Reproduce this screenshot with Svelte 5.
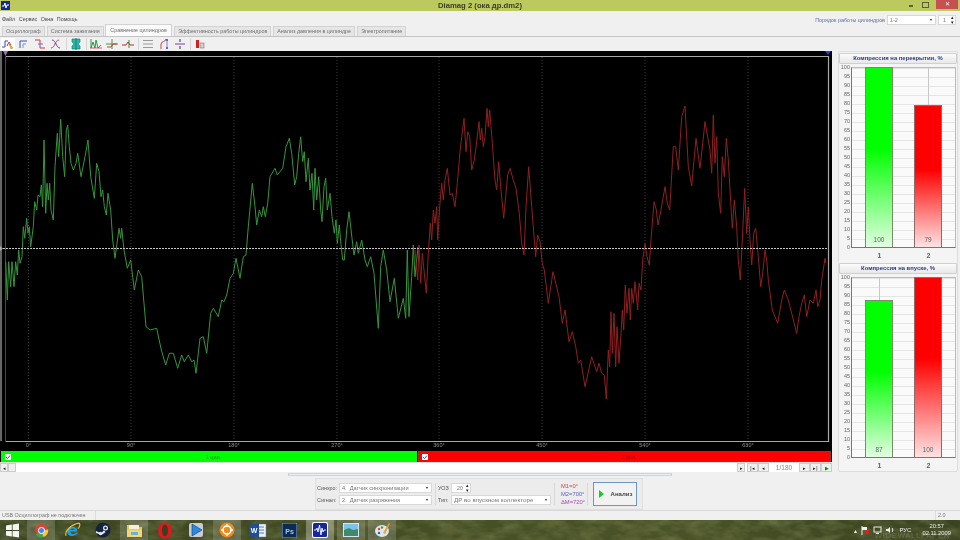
<script>
    // traced from the 3x view: [x, y] pairs, flat
    const greenRaw = [17,455,22,570,26,455,32,530,36,455,42,530,47,455,52,495,56,420,60,460,66,440,70,350,74,385,80,325,84,370,88,350,92,410,100,350,104,275,110,300,114,255,120,260,124,225,128,290,132,90,137,310,141,220,145,270,149,220,153,300,160,330,165,170,172,70,176,140,182,28,188,140,194,200,199,60,203,45,208,110,213,160,220,180,228,160,233,130,243,200,255,140,264,90,272,200,283,265,290,160,297,185,303,260,308,240,313,290,319,315,324,250,332,300,338,390,345,445,357,355,362,385,365,355,372,420,382,475,392,450,403,540,415,480,425,500,438,650,450,660,470,655,484,720,497,765,508,730,520,730,533,775,545,735,553,755,565,735,575,755,582,750,588,790,600,685,610,680,620,730,632,610,640,595,655,620,665,570,672,575,680,555,690,505,700,490,708,445,720,505,730,440,738,435,745,350,757,220,765,290,770,345,778,300,785,320,790,290,796,320,803,280,810,200,825,175,832,195,848,175,858,110,868,85,875,130,884,225,890,200,896,130,902,80,908,155,913,125,918,215,925,145,930,240,936,190,941,300,945,175,950,270,956,200,962,300,966,335,972,230,977,205,982,300,990,250,996,320,1003,370,1008,330,1012,400,1018,345,1022,395,1028,450,1033,450,1040,360,1047,305,1056,385,1062,435,1070,395,1075,430,1085,390,1095,450,1102,470,1112,440,1122,490,1135,655,1142,470,1150,420,1160,480,1170,575,1183,505,1195,625,1210,565,1217,625,1222,420,1227,620,1235,500,1240,405,1245,500,1254,410];
    const redRaw = [0,450,8,540,12,435,17,550,22,460,28,520,34,580,40,460,46,370,50,420,55,330,60,370,65,320,68,420,74,320,80,250,85,300,90,240,97,205,105,285,112,280,120,320,127,250,135,155,140,110,147,55,153,155,158,95,164,110,170,210,178,180,185,125,192,65,196,120,200,85,205,140,210,110,216,25,220,80,224,30,232,130,240,240,245,270,251,185,258,270,266,355,278,225,285,205,295,240,303,265,313,340,320,430,327,465,333,320,341,200,350,320,362,470,368,405,375,425,382,490,388,510,400,610,414,515,432,590,442,670,450,630,462,725,472,695,482,740,490,790,497,780,510,860,530,770,545,815,552,790,560,820,568,825,574,897,580,750,584,800,588,635,592,760,597,640,602,800,606,680,612,790,618,700,622,630,626,690,631,555,636,640,642,565,646,660,650,565,655,610,660,545,668,630,672,550,678,570,683,480,690,430,696,470,703,495,708,420,717,305,724,330,729,375,738,330,745,290,750,260,757,310,764,330,775,140,782,140,790,210,800,50,810,18,820,200,830,258,843,115,855,205,870,65,885,150,890,220,895,45,900,190,905,110,910,280,917,340,922,170,928,230,934,115,940,180,945,270,952,385,958,300,965,380,970,480,976,540,982,420,989,265,995,400,1000,320,1005,420,1010,495,1016,400,1022,385,1030,470,1037,560,1043,520,1050,450,1055,480,1060,540,1072,630,1088,670,1100,600,1108,570,1120,600,1130,640,1145,700,1152,650,1160,610,1168,585,1175,650,1185,600,1195,610,1203,570,1208,620,1215,600,1220,540,1230,475,1233,490];

    const trace = (raw, ox, oy) => {
        let out = [];
        for (let i = 0; i < raw.length; i += 2) {
            out.push(`${(ox + raw[i] / 3).toFixed(1)},${(oy + raw[i + 1] / 3).toFixed(1)}`);
        }
        return out.join(" ");
    };
    const greenLine = trace(greenRaw, 0, 110);
    const redLine = trace(redRaw, 415, 100);

    const grid = [
        [28.5, "0°"], [131, "90°"], [234, "180°"], [337, "270°"],
        [439, "360°"], [542, "450°"], [645, "540°"], [748, "630°"],
    ];
    const tabs = [
        "Осциллограф", "Система зажигания", "Сравнение цилиндров",
        "Эффективность работы цилиндров", "Анализ давления в цилиндре", "Электропитание",
    ];
    const ticks = Array.from({ length: 21 }, (_, i) => 100 - i * 5);
    const charts = [
        { title: "Компрессия на перекрытии, %", bars: [100, 79] },
        { title: "Компрессия на впуске, %", bars: [87, 100] },
    ];
</script>

<div class="app">
    <header class="title">
        <svg class="appicon" width="9" height="9" viewBox="0 0 9 9"><rect width="9" height="9" fill="#14289a" /><path d="M1 5h2l1-3 1 5 1-3h2" stroke="#fff" fill="none" /></svg>
        <span class="caption">Diamag 2 (ока др.dm2)</span>
        <div class="winbtns">
            <span class="min"></span>
            <span class="max"></span>
            <span class="close">✕</span>
        </div>
    </header>

    <div class="menu">
        <nav><span>Файл</span><span>Сервис</span><span>Окна</span><span>Помощь</span></nav>
        <div class="order">
            <span>Порядок работы цилиндров</span>
            <div class="select order-sel">1-2<i></i></div>
            <div class="select order-spin">1<b>▴<br />▾</b></div>
        </div>
    </div>

    <div class="tabs">
        {#each tabs as tab, i}
            <div class="tab" class:tab-on={i === 2}>{tab}</div>
        {/each}
    </div>

    <div class="toolbar">
        <button class="tool first"><svg viewBox="0 0 14 12"><path d="M1 9h3V3h3" stroke="#2a4cc0" fill="none" /><path d="M6 8l2-4 2 3" stroke="#d03030" fill="none" /><path d="M8 6l4 4-2 1z" fill="#f0c020" stroke="#807010" stroke-width=".4" /></svg></button>
        <button class="tool"><svg viewBox="0 0 14 12"><path d="M3 10V3h7" stroke="#3050c0" fill="none" /><path d="M6 10V6h3" stroke="#8090d0" fill="none" /></svg></button>
        <button class="tool"><svg viewBox="0 0 14 12"><path d="M2 2h5v8h5" stroke="#d03838" fill="none" /><path d="M5 6h5" stroke="#6070c0" fill="none" /></svg></button>
        <button class="tool"><svg viewBox="0 0 14 12"><path d="M2 10C6 10 6 2 10 2" stroke="#d04040" fill="none" /><path d="M3 2c4 0 4 8 8 8" stroke="#4050c8" fill="none" /></svg></button>
        <i class="sep"></i>
        <button class="tool"><svg viewBox="0 0 14 12"><path d="M3 1h8v3l-2 2 2 2v3H3V8l2-2-2-2z" fill="#20c0a0" stroke="#107060" stroke-width=".6" /><path d="M7 0v12" stroke="#3040a0" stroke-width=".7" /></svg></button>
        <i class="sep"></i>
        <button class="tool"><svg viewBox="0 0 14 12"><path d="M2 1v9l2-6 2 6 1-8 2 8 3-3" stroke="#2c9a40" fill="none" /><path d="M1 10h12" stroke="#d04040" stroke-width=".8" /></svg></button>
        <button class="tool"><svg viewBox="0 0 14 12"><path d="M1 6h12M7 1v10" stroke="#30a040" fill="none" /><path d="M2 9h4l2-3h4" stroke="#d03838" fill="none" /></svg></button>
        <button class="tool"><svg viewBox="0 0 14 12"><path d="M1 7h4l2-3 2 3h4" stroke="#b03030" fill="none" /><path d="M8 2v8" stroke="#309040" fill="none" /></svg></button>
        <i class="sep"></i>
        <button class="tool"><svg viewBox="0 0 14 12"><path d="M2 2.500h10M2 6h10M2 9.500h10" stroke="#9a9a9a" /></svg></button>
        <button class="tool"><svg viewBox="0 0 14 12"><path d="M4 11V6c0-3 5-2 5-5" stroke="#d04040" fill="none" /><circle cx="10" cy="2" r="1" fill="#2040d0" /><circle cx="10" cy="10" r="1" fill="#2040d0" /><path d="M10 3v6" stroke="#2040d0" stroke-width=".6" /></svg></button>
        <button class="tool"><svg viewBox="0 0 14 12"><path d="M2 6h10" stroke="#a060c0" stroke-width="1.300" /><path d="M7 1v3M7 8v3" stroke="#303030" /></svg></button>
        <i class="sep"></i>
        <button class="tool"><svg viewBox="0 0 14 12"><rect x="3" y="2" width="3" height="8" fill="#d02020" /><rect x="7" y="5" width="4" height="5" fill="#d0d0d0" stroke="#666" stroke-width=".5" /></svg></button>
    </div>

    <main class="main">
        <section class="scope">
            <svg class="plot" width="832" height="400" viewBox="0 51 832 400">
                <rect x="0" y="51" width="832" height="400" fill="#000" />
                {#each grid as [x, label]}
                    <line x1={x} x2={x} y1="57" y2="441" stroke="#3c3c3c" stroke-dasharray="1 2" />
                    <text {x} y="447" class="deg" text-anchor="middle">{label}</text>
                {/each}
                <line x1="1" x2="1" y1="51" y2="441" stroke="#8a8a8a" stroke-width="1.500" />
                <line x1="5.500" x2="5.500" y1="51" y2="442" stroke="#6a2a7a" />
                <path d="M6 56.500h822.500v385H6" fill="none" stroke="#a8a8a8" stroke-width="1.200" />
                <path d="M3 51h5l-2 4h-1z" fill="#b060c0" />
                <path d="M825 51h6l-3 4z" fill="#2040e0" />
                <polyline points={greenLine} fill="none" stroke="#35963a" stroke-width="1" />
                <polyline points={redLine} fill="none" stroke="#902020" stroke-width="1" />
                <line x1="0" x2="828" y1="248.500" y2="248.500" stroke="#c8c8c8" stroke-dasharray="2 1" />
                <path d="M0 246l3 2.500-3 2.500z" fill="#aaa" />
            </svg>

            <div class="cylbar">
                <div class="cyl green">
                    <svg class="check" viewBox="0 0 6 6"><rect width="6" height="6" fill="#fff" /><path d="M1 3l1.500 1.500L5 1.500" stroke="#2860c0" fill="none" /></svg>
                    <span class="cyltext">1 цил.</span>
                </div>
                <div class="cyl red">
                    <svg class="check" viewBox="0 0 6 6"><rect width="6" height="6" fill="#fff" /><path d="M1 3l1.500 1.500L5 1.500" stroke="#2860c0" fill="none" /></svg>
                    <span class="cyltext">2 цил.</span>
                </div>
            </div>

            <div class="navrow">
                <span class="navbtn small">◂</span>
                <span class="navbtn small"></span>
                <span class="spacer"></span>
                <span class="navbtn small">▸</span>
                <span class="navbtn gap">|◂</span>
                <span class="navbtn">◂</span>
                <span class="count">1/180</span>
                <span class="navbtn">▸</span>
                <span class="navbtn">▸|</span>
                <span class="navbtn play">▶</span>
            </div>
        </section>

        <aside class="side">
            {#each charts as chart}
                <div class="chart">
                    <div class="chart-title">{chart.title}</div>
                    <div class="chart-body">
                        <div class="yaxis">
                            {#each ticks as t}<span>{t}</span>{/each}
                        </div>
                        <div class="bars">
                            {#each chart.bars as v, i}
                                <div class="slot">
                                    <div class="bar" class:bar-red={i === 1} style="height: {v * 1.8}px">
                                        <span>{v}</span>
                                    </div>
                                </div>
                            {/each}
                        </div>
                    </div>
                    <div class="xaxis"><span>1</span><span>2</span></div>
                </div>
            {/each}
        </aside>
    </main>

    <section class="bottom">
        <div class="hscroll"></div>
        <div class="group">
            <div class="fields">
                <label>Синхро:</label>
                <div class="select wide">4.&nbsp; Датчик синхронизации<i></i></div>
                <label>Сигнал:</label>
                <div class="select wide">2.&nbsp; Датчик разряжения<i></i></div>
            </div>
            <div class="fields second">
                <label>УОЗ</label>
                <div class="select spin">20<b>▴<br />▾</b></div>
                <label>Тип:</label>
                <div class="select type">ДР во впускном коллекторе<i></i></div>
            </div>
            <div class="marks">
                <span class="m1">M1=0°</span>
                <span class="m2">M2=700°</span>
                <span class="m3">ΔM=720°</span>
            </div>
            <button class="analyze"><em></em>Анализ</button>
        </div>
    </section>

    <footer class="status">
        <span class="st-left">USB Осциллограф не подключен</span>
        <span class="st-mid"></span>
        <span class="st-right">2.0</span>
    </footer>

    <div class="taskbar">
        <svg class="wallpaper" width="960" height="20">
            <filter id="leaves" x="0" y="0" width="100%" height="100%">
                <feTurbulence type="fractalNoise" baseFrequency="0.05 0.11" numOctaves="3" seed="7" />
                <feColorMatrix values="0 0 0 0 0.42  0 0 0 0 0.47  0 0 0 0 0.2  1.1 0 0 0 -0.38" />
            </filter>
            <rect width="960" height="20" filter="url(#leaves)" opacity="0.55" />
        </svg>
        <span class="task start"><svg width="15" height="15" viewBox="0 0 15 15"><path d="M1 2.500l5.800-.9v5.500H1zM7.600 1.500L14 .5v6.600H7.600zM1 8h5.800v5.500L1 12.600zM7.600 8H14v6.600l-6.400-1z" fill="#f4f4f4" /></svg></span>
        <span class="task lit"><svg width="15" height="15" viewBox="0 0 16 16"><circle cx="8" cy="8" r="7" fill="#e0402f" /><path d="M8 8L2 12a7 7 0 0 0 8 3z" fill="#3ba84a" /><path d="M8 8l7-1a7 7 0 0 1-5 8z" fill="#f5c82e" /><circle cx="8" cy="8" r="3.300" fill="#4a86e8" stroke="#fff" /></svg></span>
        <span class="task"><svg width="17" height="17" viewBox="0 0 16 16"><path d="M3 9.500c0-3 2-5 5-5s4.500 2 4.500 4.500H6c0 3 4 3 5.500 1.200h1.600C11.500 14 3 14.500 3 9.500zM6 7.500h4c0-2-3.500-2-4 0z" fill="#1f9fe0" /><path d="M2 13C0 9 7 2 14 1c2 1 0 5-1 5" fill="none" stroke="#f0c030" stroke-width="1.100" /></svg></span>
        <span class="task"><svg width="16" height="16" viewBox="0 0 16 16"><circle cx="8" cy="8" r="7.500" fill="#14243e" /><circle cx="10.500" cy="6" r="2.500" fill="#dfe6ee" /><circle cx="10.500" cy="6" r="1.200" fill="#14243e" /><path d="M1 9l5 2.200 3-3 1.500 2-4 2.800L1 11z" fill="#dfe6ee" /><circle cx="5.500" cy="11.500" r="1.700" fill="#dfe6ee" /></svg></span>
        <span class="task lit"><svg width="17" height="15" viewBox="0 0 17 15"><path d="M1 2h6l1 2h8v10H1z" fill="#e8c75e" /><rect x="3" y="2" width="10" height="4" fill="#f5f0d8" /><path d="M1 7h15v7H1z" fill="#f2d67a" /><rect x="5" y="9" width="7" height="3" fill="#5fb6e6" /></svg></span>
        <span class="task"><svg width="16" height="17" viewBox="0 0 16 17"><ellipse cx="8" cy="8.500" rx="7" ry="8" fill="#e0171f" /><ellipse cx="8" cy="8.500" rx="3" ry="6" fill="#3c3e1e" /></svg></span>
        <span class="task"><svg width="16" height="16" viewBox="0 0 16 16"><rect x="1" y="1" width="14" height="14" rx="2" fill="#c8ccd0" /><path d="M4 2l10 6-10 6z" fill="#2a8ae0" stroke="#123a70" stroke-width=".6" /></svg></span>
        <span class="task lit"><svg width="16" height="16" viewBox="0 0 16 16"><circle cx="8" cy="8" r="7.500" fill="#f08a1a" /><circle cx="8" cy="8" r="4" fill="none" stroke="#fff" stroke-width="1.600" /><path d="M8 2v3M8 11v3M2 8h3M11 8h3" stroke="#fff" stroke-width="1.300" /></svg></span>
        <span class="task"><svg width="18" height="15" viewBox="0 0 18 15"><rect x="6" y="1" width="11" height="13" fill="#eef2f8" stroke="#5a7ab0" stroke-width=".5" /><path d="M10 4h5M10 7h5M10 10h5" stroke="#5a7ab0" /><path d="M0 2l10-2v15L0 13z" fill="#1d4f9a" /><text x="5" y="10" class="ico-t">W</text></svg></span>
        <span class="task"><svg width="15" height="15" viewBox="0 0 15 15"><rect width="15" height="15" fill="#0c2b4e" stroke="#7fa8d8" stroke-width="1" /><text x="7.500" y="11" class="ico-t ps">Ps</text></svg></span>
        <span class="task task-on"><svg width="16" height="16" viewBox="0 0 16 16"><rect width="16" height="16" rx="2" fill="#fff" /><rect x="1" y="1" width="14" height="14" rx="1.500" fill="#14289a" /><path d="M2 8h2l1-2 1 4 1.500-7 1.500 10 1-7 1 4 1-2h2" stroke="#fff" fill="none" stroke-width=".9" /></svg></span>
        <span class="task lit"><svg width="16" height="14" viewBox="0 0 16 14"><rect width="16" height="14" fill="#d4e6f0" /><rect x="1" y="1" width="14" height="6" fill="#7fc2e8" /><path d="M1 7l5-2 4 2 5-1v7H1z" fill="#3f8a6a" /></svg></span>
        <span class="task lit"><svg width="17" height="16" viewBox="0 0 17 16"><ellipse cx="8" cy="9" rx="7" ry="6" fill="#dfe6ea" /><circle cx="5" cy="7" r="1.200" fill="#e04030" /><circle cx="8" cy="5.500" r="1.200" fill="#30a050" /><circle cx="5" cy="11" r="1.200" fill="#2060d0" /><path d="M9 11L15 1l1 .8L11 12z" fill="#e8a030" /></svg></span>
        <span class="spacer"></span>
        <div class="tray">
            <span class="tray-i">▴</span>
            <svg width="8" height="9" viewBox="0 0 8 9"><path d="M1 0v9" stroke="#eee" /><path d="M1 1h5v3H1z" fill="#eee" /><rect x="4" y="4" width="4" height="4" fill="#e02020" /></svg>
            <svg width="9" height="8" viewBox="0 0 9 8"><rect x="1" y="1" width="7" height="5" fill="none" stroke="#eee" /><path d="M3 7.500h3" stroke="#eee" /></svg>
            <svg width="9" height="8" viewBox="0 0 9 8"><path d="M0 3h2l2-2v6L2 5H0z" fill="#eee" /><path d="M6 2c1 1 1 3 0 4" stroke="#eee" fill="none" /></svg>
            <span class="lang">РУС</span>
            <span class="clock">20:57<br />02.11.2009</span>
        </div>
        <span class="watermark">WIDEWALLPAPER</span>
    </div>
</div>

<style>
    :global(body) {
        margin: 0;
        background: #f0f0f0;
    }

    .app {
        position: relative;
        width: 960px;
        height: 540px;
        overflow: hidden;
        display: flex;
        flex-direction: column;
        background: #f0f0f0;
        color: #555;
        font: 5.400px "Liberation Sans", Arial, sans-serif;
        filter: blur(0.3px);
    }

    .title {
        position: relative;
        height: 11px;
        flex: none;
        background: #bcc95f;
        display: flex;
        align-items: center;
        justify-content: center;
    }

    .appicon {
        position: absolute;
        left: 1px;
        top: 1px;
    }

    .caption {
        font-size: 7.700px;
        font-weight: bold;
        color: #3a3f25;
    }

    .winbtns {
        position: absolute;
        right: 2px;
        top: 0;
        height: 9px;
        display: flex;
        align-items: center;
    }

    .winbtns span {
        display: block;
    }

    .min {
        width: 4px;
        height: 2px;
        margin-top: 3px;
        margin-right: 9px;
        background: #5a5f35;
    }

    .max {
        width: 5px;
        height: 4px;
        margin-right: 7px;
        border: 1px solid #5a5f35;
    }

    .close {
        width: 22px;
        height: 9px;
        background: #c75050;
        color: #fff;
        font-size: 6px;
        line-height: 9px;
        text-align: center;
    }

    .menu {
        height: 14px;
        flex: none;
        display: flex;
        align-items: center;
        justify-content: space-between;
        padding: 0 4px 0 2px;
    }

    .menu nav {
        display: flex;
        gap: 3.500px;
        color: #444;
        margin-top: 2px;
    }

    .order {
        display: flex;
        align-items: center;
        gap: 2px;
        color: #6070a0;
        margin-top: 4px;
    }

    .select {
        position: relative;
        box-sizing: border-box;
        height: 10px;
        background: #fff;
        border: 1px solid #d8d8d8;
        line-height: 8px;
        padding-left: 2px;
        color: #777;
    }

    .select i {
        position: absolute;
        right: 3px;
        top: 3px;
        border: 1.500px solid transparent;
        border-top: 2px solid #222;
        border-bottom: 0;
    }

    .select b {
        position: absolute;
        right: 1px;
        top: -1px;
        font-size: 5px;
        line-height: 4.500px;
        color: #222;
        font-weight: normal;
    }

    .order-sel {
        width: 49px;
    }

    .order-spin {
        width: 18px;
        padding-left: 4px;
    }

    .tabs {
        height: 12px;
        flex: none;
        display: flex;
        align-items: flex-end;
        padding-left: 2px;
        gap: 2px;
        border-bottom: 1px solid #c4c4c4;
        box-sizing: border-box;
    }

    .tab {
        height: 9px;
        padding: 0 3px;
        background: #e6e6e6;
        border: 1px solid #d2d2d2;
        border-bottom: 0;
        border-radius: 1px 1px 0 0;
        line-height: 9px;
        color: #707070;
    }

    .tab-on {
        height: 11px;
        padding: 0 4.500px;
        background: #fafafa;
        line-height: 10px;
        margin-left: -1px;
    }

    .toolbar {
        height: 14px;
        flex: none;
        display: flex;
        align-items: center;
        padding-left: 1px;
        gap: 2px;
    }

    .tool {
        width: 14px;
        height: 12px;
        padding: 0;
        border: 0;
        background: none;
        display: block;
    }

    .tool svg {
        display: block;
        width: 14px;
        height: 12px;
    }

    .first {
        background: #fff;
    }

    .sep {
        width: 1px;
        height: 12px;
        background: #d4d4d4;
        margin: 0 0.500px;
    }

    .main {
        height: 421px;
        flex: none;
        display: flex;
    }

    .scope {
        width: 832px;
        flex: none;
    }

    .plot {
        display: block;
    }

    .deg {
        font: 5.500px "Liberation Sans", Arial, sans-serif;
        fill: #909090;
    }

    .cylbar {
        height: 11px;
        display: flex;
        background: #000;
        gap: 1px;
        padding: 0 1px 0 1px;
        box-sizing: border-box;
    }

    .cyl {
        display: flex;
        align-items: center;
        box-sizing: border-box;
        padding-left: 3px;
        border: 1px solid transparent;
    }

    .green {
        width: 416px;
        background: #00ff00;
        color: #0a8a0a;
    }

    .red {
        flex: 1;
        background: #ff0000;
        border-color: #a03030;
        color: #a00000;
    }

    .check {
        width: 6px;
        height: 6px;
    }

    .cyltext {
        flex: 1;
        text-align: center;
    }

    .navrow {
        height: 10px;
        display: flex;
        align-items: center;
        background: #fff;
        border-top: 1px solid #ddd;
        box-sizing: border-box;
    }

    .navbtn {
        width: 11px;
        height: 9px;
        background: #efefef;
        border: 0.500px solid #ccc;
        box-sizing: border-box;
        font-size: 5px;
        line-height: 8px;
        text-align: center;
        color: #222;
    }

    .small {
        width: 8px;
    }

    .gap {
        margin-left: 2px;
    }

    .play {
        color: #0a8a0a;
    }

    .count {
        width: 30px;
        text-align: center;
        color: #888;
        font-size: 6.500px;
    }

    .spacer {
        flex: 1;
    }

    .side {
        width: 120px;
        margin-left: 6px;
        box-sizing: border-box;
        border: 1px solid #ddd;
        border-radius: 2px;
        background: #f4f4f4;
        display: flex;
        flex-direction: column;
    }

    .chart {
        height: 210px;
        box-sizing: border-box;
        padding-top: 1px;
    }

    .chart-title {
        height: 11px;
        background: linear-gradient(#fbfbfb, #e8e8e8);
        border: 1px solid #d0d0d0;
        border-radius: 1px;
        box-sizing: border-box;
        text-align: center;
        font-size: 5.900px;
        font-weight: bold;
        line-height: 9px;
        color: #283a80;
    }

    .chart-body {
        display: flex;
        margin-top: 3px;
    }

    .yaxis {
        position: relative;
        width: 12px;
        height: 180px;
        display: flex;
        flex-direction: column;
        justify-content: space-between;
        text-align: right;
        padding-right: 1px;
        box-sizing: border-box;
        font-size: 5.500px;
        line-height: 0;
        color: #666;
    }

    .bars {
        width: 105px;
        height: 181px;
        box-sizing: border-box;
        display: flex;
        align-items: flex-end;
        justify-content: center;
        gap: 21px;
        border-left: 1px solid #777;
        border-bottom: 1px solid #777;
        border-right: 1px solid #bbb;
        border-top: 1px solid #bbb;
        background:
            repeating-linear-gradient(to bottom, #e4e4e4 0 1px, transparent 1px 9px), #fafafa;
    }

    .slot {
        width: 28px;
        display: flex;
        align-items: flex-end;
        height: 100%;
        background: linear-gradient(#c8c8c8, #c8c8c8) center / 1px 100% no-repeat;
    }

    .bar {
        box-sizing: border-box;
        width: 100%;
        border: 1px solid #7a8a6a;
        border-bottom: 0;
        background: linear-gradient(#00ff00 0 45%, #e2ffe2 100%);
        display: flex;
        align-items: flex-end;
        justify-content: center;
    }

    .bar-red {
        border-color: #906a6a;
        background: linear-gradient(#ff0000 0 45%, #ffe2e2 100%);
    }

    .bar span {
        margin-bottom: 4px;
        color: #566;
        font-size: 6.500px;
    }

    .xaxis {
        display: flex;
        justify-content: center;
        gap: 45px;
        margin-top: 4px;
        padding-left: 12px;
        font-size: 7px;
        font-weight: bold;
        color: #566;
    }

    .bottom {
        height: 38px;
        flex: none;
        display: flex;
        flex-direction: column;
        align-items: center;
    }

    .hscroll {
        width: 384px;
        height: 3px;
        margin-top: 1px;
        background: #eaf0f6;
        border: 0.500px solid #c8d4e0;
        box-sizing: border-box;
    }

    .group {
        width: 328px;
        height: 32px;
        margin-top: 2px;
        margin-left: -2px;
        box-sizing: border-box;
        display: flex;
        align-items: center;
        background: #ececec;
        border: 1px solid #e0e0e0;
        padding: 0 5px 0 1px;
    }

    .fields {
        display: grid;
        grid-template-columns: 22px 93px;
        row-gap: 2px;
        align-items: center;
        padding-right: 3px;
        border-right: 1px solid #d8d8d8;
    }

    .second {
        grid-template-columns: 13px 100px;
        padding-left: 2px;
    }

    .wide {
        width: 93px;
        font-size: 5.600px;
    }

    .spin {
        width: 20px;
        padding-left: 5px;
    }

    .type {
        width: 100px;
        font-size: 6.200px;
    }

    .marks {
        width: 33px;
        display: flex;
        flex-direction: column;
        gap: 2px;
        padding-left: 6px;
        box-sizing: border-box;
        border-right: 1px solid #d8d8d8;
        font-size: 5.800px;
    }

    .m1 {
        color: #d04050;
    }

    .m2 {
        color: #5a60c8;
    }

    .m3 {
        color: #b040c0;
    }

    .analyze {
        width: 45px;
        height: 24px;
        margin-left: 5px;
        display: flex;
        align-items: center;
        gap: 7px;
        padding: 0 0 0 5px;
        box-sizing: border-box;
        background: #f2f2f2;
        border: 1px solid #6a98c0;
        font: bold 6px "Liberation Sans", Arial, sans-serif;
        color: #444;
    }

    .analyze em {
        width: 0;
        height: 0;
        border-left: 5px solid #10d020;
        border-top: 4.500px solid transparent;
        border-bottom: 4.500px solid transparent;
    }

    .status {
        height: 10px;
        flex: none;
        display: flex;
        box-sizing: border-box;
        border-top: 1px solid #d8d8d8;
        line-height: 9px;
        color: #777;
    }

    .st-left {
        width: 96px;
        padding-left: 2px;
        border-right: 1px solid #ddd;
        box-sizing: border-box;
    }

    .st-mid {
        flex: 1;
    }

    .st-right {
        width: 25px;
        padding-left: 2px;
        box-sizing: border-box;
        border-left: 1px solid #ddd;
    }

    .taskbar {
        position: relative;
        height: 20px;
        flex: none;
        display: flex;
        align-items: center;
        background: linear-gradient(90deg, #3a4420, #454d24 40%, #4a5227 70%, #3a4220);
        color: #eee;
    }

    .wallpaper {
        position: absolute;
        left: 0;
        top: 0;
    }

    .task {
        position: relative;
        width: 28px;
        height: 20px;
        margin-right: 3px;
        flex: none;
        box-sizing: border-box;
        display: flex;
        align-items: center;
        justify-content: center;
    }

    .start {
        width: 24px;
    }

    .lit {
        background: rgba(255, 255, 255, 0.16);
    }

    .task-on {
        background: rgba(255, 255, 255, 0.3);
    }

    .ico-t {
        font: bold 7px "Liberation Sans", Arial, sans-serif;
        fill: #fff;
        text-anchor: middle;
    }

    .ps {
        fill: #9cc6f0;
    }

    .tray {
        position: relative;
        display: flex;
        align-items: center;
        gap: 4px;
        padding-right: 9px;
    }

    .tray-i {
        font-size: 6px;
    }

    .lang {
        font-size: 6px;
    }

    .clock {
        font-size: 5.800px;
        line-height: 7.500px;
        text-align: center;
        margin-left: 7px;
    }

    .watermark {
        position: absolute;
        right: 10px;
        bottom: 0;
        font-size: 8px;
        letter-spacing: 0.500px;
        color: rgba(255, 255, 255, 0.2);
    }
</style>
